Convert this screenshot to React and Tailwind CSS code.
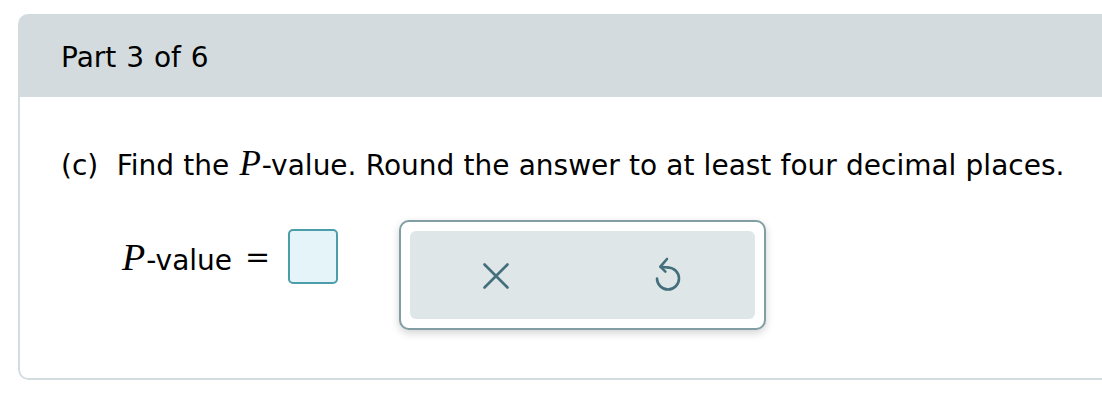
import React from "react";

function XIcon() {
  return (
    <svg width="26" height="26" viewBox="0 0 26 26" fill="none">
      <path d="M1.5 1.5L24.5 24.5M24.5 1.5L1.5 24.5" stroke="#426f7b" strokeWidth="2.6" strokeLinecap="round" />
    </svg>
  );
}

function UndoIcon() {
  return (
    <svg width="30" height="36" viewBox="0 0 30 36" fill="none">
      <path
        d="M15 12.5 A11 11 0 1 1 4 23.5"
        stroke="#426f7b"
        strokeWidth="2.6"
        strokeLinecap="round"
      />
      <path
        d="M14 4 L7.4 11.6 L12.4 16.6"
        stroke="#426f7b"
        strokeWidth="2.6"
        strokeLinecap="round"
        strokeLinejoin="round"
      />
      <path d="M7.6 11.9 L15 12.5" stroke="#426f7b" strokeWidth="2.6" strokeLinecap="round" />
    </svg>
  );
}

export default function App() {
  const sans = { fontFamily: '"DejaVu Sans", Verdana, sans-serif' };
  const serif = { fontFamily: '"Liberation Serif", "Times New Roman", serif' };
  return (
    <div className="w-[1102px] h-[412px] bg-white overflow-hidden pt-[14px] pl-[18px]" style={sans}>
      <div className="w-[1120px] rounded-l-[10px] overflow-hidden">
        <div className="h-[83px] bg-[#d3dbde] flex items-center pl-[43px] pt-[5px] text-[28px] text-black [word-spacing:1px]">
          Part 3 of 6
        </div>
        <div className="h-[283px] border-l-2 border-b-2 border-[#d3dcdf] rounded-bl-[10px] pl-[41px] pt-[50px] text-black">
          <div className="text-[28px] leading-[34px] whitespace-nowrap [word-spacing:0.3px]">
            (c)&nbsp; Find the{" "}
            <span className="italic text-[35px] ml-[1px] mr-[1px]" style={serif}>P</span>
            -value. Round the answer to at least four decimal places.
          </div>
          <div className="flex items-start mt-[37px] pl-[61px]">
            <div className="flex items-center h-[55px] mt-[9px]">
              <span className="text-[28px] leading-none">
                <span className="italic text-[38px] pr-[1px]" style={serif}>P</span>
                -value
              </span>
              <span className="text-[30px] leading-none ml-[13px] mr-[18px]" style={{ fontFamily: '"DejaVu Serif", serif' }}>=</span>
              <div className="w-[50px] h-[55px] border-2 border-[#4b9daa] bg-[#e5f4f8] rounded-[5px]" />
            </div>
            <div className="ml-[61px] w-[367px] h-[110px] border-2 border-[#819ea5] rounded-[10px] bg-white p-[9px] shadow-[0_3px_8px_rgba(0,0,0,0.18)]">
              <div className="w-full h-full bg-[#dfe6e8] rounded-[6px] flex">
                <div className="w-[172px] flex items-center justify-center pt-[1px]">
                  <XIcon />
                </div>
                <div className="w-[172px] flex items-center justify-center pb-[4px]">
                  <UndoIcon />
                </div>
              </div>
            </div>
          </div>
        </div>
      </div>
    </div>
  );
}
